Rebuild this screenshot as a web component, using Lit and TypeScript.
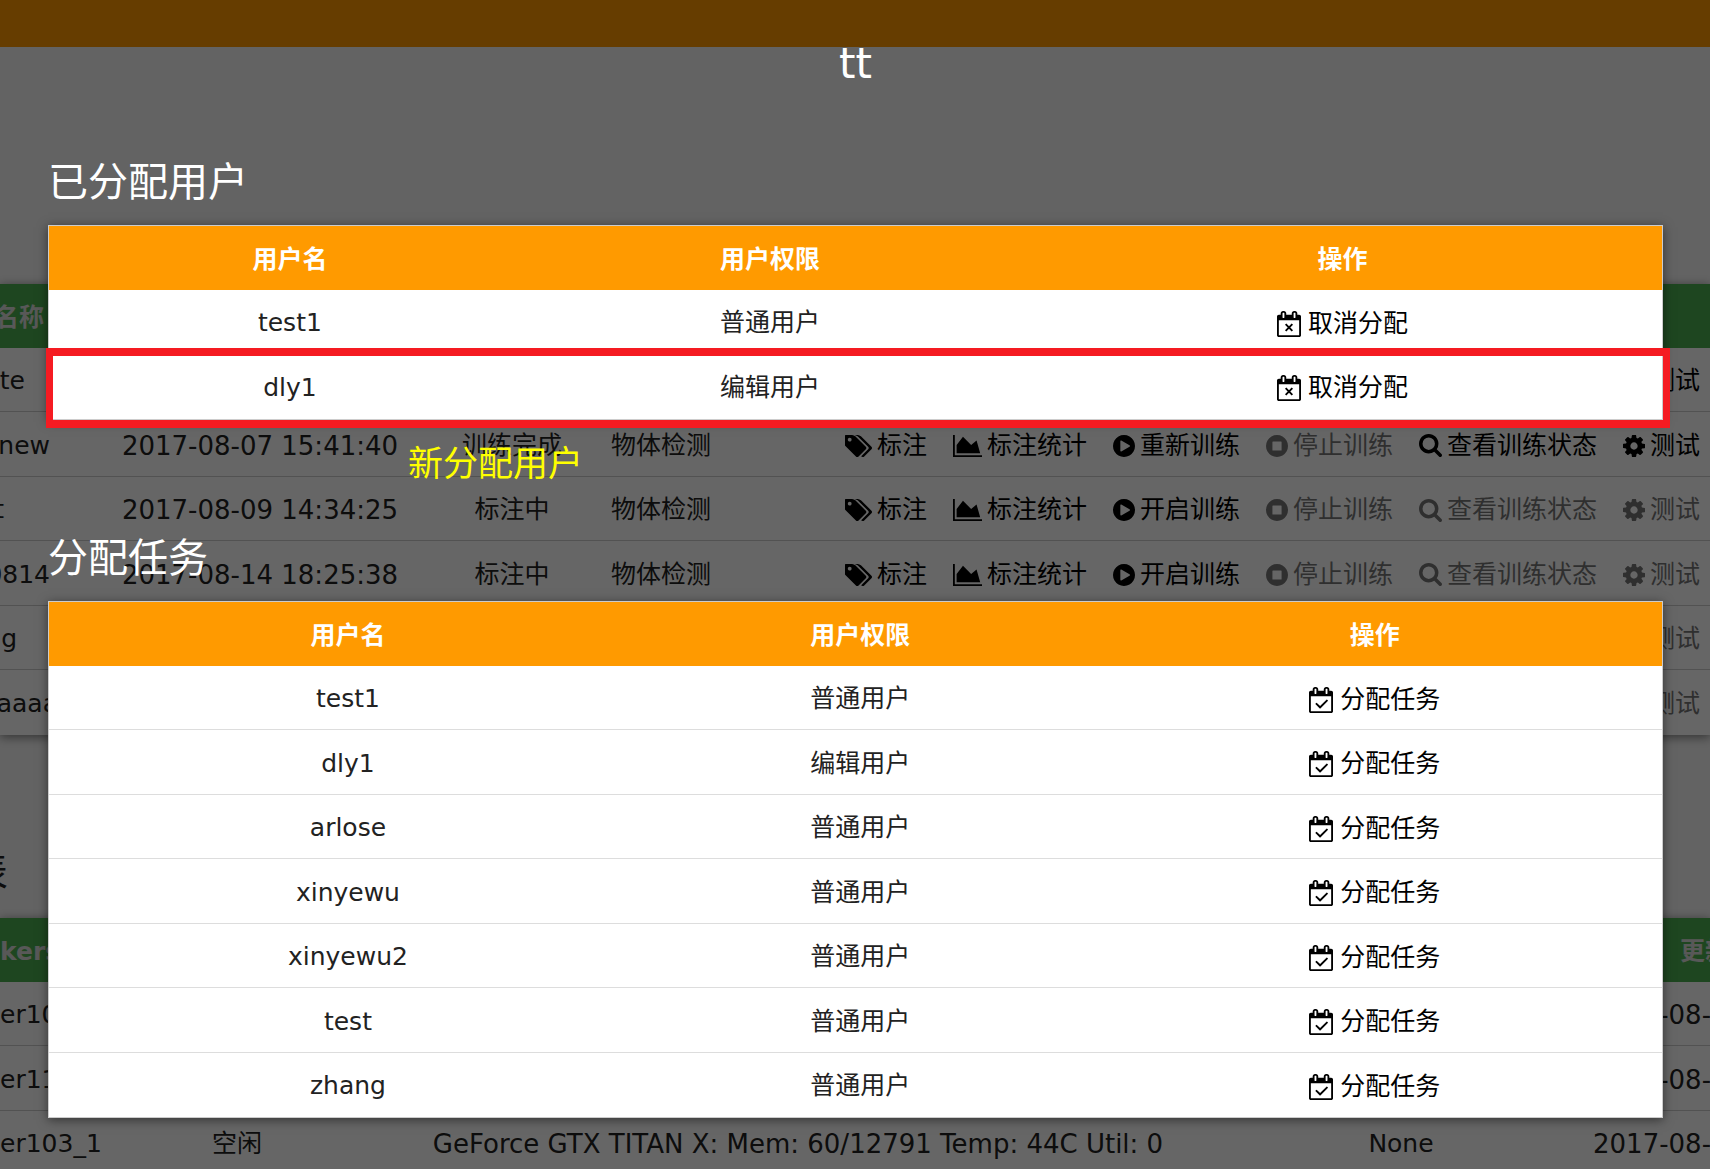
import { LitElement, html, css, svg } from "lit";
import { customElement } from "lit/decorators.js";

type IconName = "tags" | "chart" | "play" | "stop" | "search" | "cog" | "cancel" | "assign";

const DISC =
  "M896 128q209 0 385.500 103t279.500 279.500 103 385.500-103 385.500-279.500 279.500-385.500 103-385.500-103-279.500-279.500-103-385.500 103-385.500 279.500-279.500 385.500-103z";
const CALENDAR =
  "M128 1664h1408v-1024h-1408v1024zm384-1216v-288q0-14-9-23t-23-9h-64q-14 0-23 9t-9 23v288q0 14 9 23t23 9h64q14 0 23-9t9-23zm768 0v-288q0-14-9-23t-23-9h-64q-14 0-23 9t-9 23v288q0 14 9 23t23 9h64q14 0 23-9t9-23zm384-64v1280q0 52-38 90t-90 38h-1408q-52 0-90-38t-38-90v-1280q0-52 38-90t90-38h128v-96q0-66 47-113t113-47h64q66 0 113 47t47 113v96h384v-96q0-66 47-113t113-47h64q66 0 113 47t47 113v96h128q52 0 90 38t38 90z";

const ICONS: Record<IconName, { box: string; width: number; height: number; shape: unknown }> = {
  tags: {
    box: "0 128 1835 1515", width: 27, height: 22,
    shape: svg`<path d="M448 448q0-53-37.500-90.500t-90.500-37.500-90.500 37.500-37.500 90.500 37.500 90.500 90.500 37.500 90.500-37.500 37.500-90.500zm1003 576q0 53-37 90l-491 492q-39 37-91 37-53 0-90-37l-715-716q-38-37-64.500-101t-26.500-117v-416q0-52 38-90t90-38h416q53 0 117 26.500t102 64.500l715 714q37 39 37 91zm384 0q0 53-37 90l-491 492q-39 37-91 37-36 0-59-14t-53-45l470-470q37-37 37-90 0-52-37-91l-715-714q-38-38-102-64.500t-117-26.500h224q53 0 117 26.500t102 64.500l715 714q37 39 37 91z"/>`,
  },
  chart: {
    box: "0 128 2048 1536", width: 29, height: 22,
    shape: svg`<path d="M2048 1536v128h-2048v-1536h128v1408h1920zm-384-1024l256 896h-1664v-576l448-576 576 576z"/>`,
  },
  play: {
    box: "128 128 1536 1536", width: 22, height: 22,
    shape: svg`<path d="${DISC}m384 823q32-18 32-55t-32-55l-544-320q-31-19-64-1-32 19-32 56v640q0 37 32 56 16 8 32 8 17 0 32-9z"/>`,
  },
  stop: {
    box: "128 128 1536 1536", width: 22, height: 22,
    shape: svg`<path fill-rule="evenodd" d="${DISC}M608 576h576q32 0 32 32v576q0 32-32 32h-576q-32 0-32-32v-576q0-32 32-32z"/>`,
  },
  search: {
    box: "64 128 1664 1664", width: 23, height: 23,
    shape: svg`<path d="M1216 832q0-185-131.500-316.500t-316.500-131.500-316.500 131.500-131.500 316.500 131.500 316.500 316.500 131.500 316.500-131.500 131.500-316.500zm512 832q0 52-38 90t-90 38q-54 0-90-38l-343-342q-179 124-399 124-143 0-273.500-55.500t-225-150-150-225-55.500-273.500 55.500-273.500 150-225 225-150 273.500-55.500 273.500 55.500 225 150 150 225 55.500 273.500q0 220-124 399l343 343q37 37 37 90z"/>`,
  },
  cog: {
    box: "128 128 1536 1536", width: 22, height: 22,
    shape: svg`<path d="M1152 896q0-106-75-181t-181-75-181 75-75 181 75 181 181 75 181-75 75-181zm512-109v222q0 12-8 23t-20 13l-185 28q-19 54-39 91 35 50 107 138 10 12 10 25t-9 23q-27 37-99 108t-94 71q-12 0-26-9l-138-108q-44 23-91 38-16 136-29 186-7 28-36 28h-222q-14 0-24.500-8.500t-11.500-21.500l-28-184q-49-16-90-37l-141 107q-10 9-25 9-14 0-25-11-126-114-165-168-7-10-7-23 0-12 8-23 15-21 51-66.500t54-70.500q-27-50-41-99l-183-27q-13-2-21-12.500t-8-23.500v-222q0-12 8-23t19-13l186-28q14-46 39-92-40-57-107-138-10-12-10-24 0-10 9-23 26-36 98.500-107.500t94.500-71.500q13 0 26 10l138 107q44-23 91-38 16-136 29-186 7-28 36-28h222q14 0 24.500 8.500t11.500 21.500l28 184q49 16 90 37l142-107q9-9 24-9 13 0 25 10 129 119 165 170 7 8 7 22 0 12-8 23-15 21-51 66.500t-54 70.500q26 50 41 98l183 28q13 2 21 12.500t8 23.500z"/>`,
  },
  cancel: {
    box: "0 0 1664 1792", width: 24, height: 26,
    shape: svg`<path d="${CALENDAR}"/><path d="M600 910l464 464M1064 910l-464 464" fill="none" stroke="currentColor" stroke-width="130"/>`,
  },
  assign: {
    box: "0 0 1664 1792", width: 24, height: 26,
    shape: svg`<path d="${CALENDAR}"/><path d="M1303 964l-512 512q-10 9-23 9t-23-9l-288-288q-9-10-9-23t9-22l46-46q9-9 22-9t23 9l220 220 444-444q10-9 23-9t22 9l46 46q9 9 9 22t-9 23z"/>`,
  },
};

const icon = (name: IconName) => {
  const i = ICONS[name];
  return html`<svg class="icon" viewBox=${i.box} width=${i.width} height=${i.height} preserveAspectRatio="none" aria-hidden="true">${i.shape}</svg>`;
};

interface Task {
  name: string;
  // right edge of the name inside the scrolled column
  edge: number;
  date?: string;
  status?: string;
  kind?: string;
  train?: string;
  finished?: boolean;
  testable?: boolean;
}

const TASKS: Task[] = [
  { name: "te", edge: 25, testable: true },
  { name: "new", edge: 50, date: "2017-08-07 15:41:40", status: "训练完成", kind: "物体检测", train: "重新训练", finished: true, testable: true },
  { name: "t", edge: 4, date: "2017-08-09 14:34:25", status: "标注中", kind: "物体检测", train: "开启训练" },
  { name: "0814", edge: 50, date: "2017-08-14 18:25:38", status: "标注中", kind: "物体检测", train: "开启训练" },
  { name: "g", edge: 17 },
  { name: "aaaa", edge: 58 },
];

const WORKERS = [
  { name: "er10", date: "2017-08-" },
  { name: "er11", date: "2017-08-" },
  { name: "er103_1", status: "空闲", gpu: "GeForce GTX TITAN X: Mem: 60/12791 Temp: 44C Util: 0", task: "None", date: "2017-08-" },
];

interface User { name: string; role: string }

const ASSIGNED: User[] = [
  { name: "test1", role: "普通用户" },
  { name: "dly1", role: "编辑用户" },
];

const AVAILABLE: User[] = [
  { name: "test1", role: "普通用户" },
  { name: "dly1", role: "编辑用户" },
  { name: "arlose", role: "普通用户" },
  { name: "xinyewu", role: "普通用户" },
  { name: "xinyewu2", role: "普通用户" },
  { name: "test", role: "普通用户" },
  { name: "zhang", role: "普通用户" },
];

@customElement("app-root")
export class AppRoot extends LitElement {
  static styles = css`
    :host {
      display: block;
      position: relative;
      height: 100vh;
      overflow: hidden;
      background: #f8f8f8;
      color: #222;
      font-family: "DejaVu Sans", "Noto Sans CJK SC", sans-serif;
      font-size: 25px;
      line-height: 40px;
    }
    h1, h2 { margin: 0; font-weight: 400; }
    .bar { height: 47px; background: #ff9a00; }
    .page { padding-top: 237px; }
    .grid {
      width: 100%;
      table-layout: fixed;
      border-collapse: separate;
      border-spacing: 0;
      background: #fff;
      text-align: center;
      white-space: nowrap;
      box-shadow: 0 2px 10px rgba(0, 0, 0, 0.5);
    }
    .grid th, .grid td {
      box-sizing: border-box;
      height: 64px;
      padding: 3px 0 0;
    }
    .grid td { border-bottom: 1px solid #ddd; }
    .grid tr:nth-child(even) td { height: 65px; }
    .grid tbody tr:last-child td { border-bottom-color: transparent; }
    .grid th { color: #fff; font-weight: 700; }
    .page .grid th { background: #4cb050; color: #ddd; }
    .page .grid td { border-bottom-color: #ccc; }
    .c-name { width: 90px; }
    .c-date { width: 340px; }
    .c-status { width: 164px; }
    .c-kind { width: 134px; }
    .c-worker { width: 120px; }
    .c-state { width: 234px; }
    .c-gpu { width: 888px; }
    .c-task { width: 318px; }
    .edge { display: flex; justify-content: flex-end; }
    .wide { font-size: 26px; }
    .page .left { text-align: left; }
    .page .updated { padding-left: 33px; text-align: left; }
    .page .updated-head { padding-left: 120px; text-align: left; }
    .section {
      width: 8px;
      margin: 107px 0 16px;
      display: flex;
      justify-content: flex-end;
      font-size: 40px;
      line-height: 60px;
    }
    .actions {
      display: flex;
      justify-content: flex-end;
      gap: 26px;
      padding-right: 10px;
    }
    button {
      display: inline-flex;
      align-items: center;
      gap: 5px;
      padding: 0;
      border: 0;
      background: none;
      color: #000;
      font: inherit;
      white-space: nowrap;
      vertical-align: middle;
      cursor: pointer;
    }
    button:disabled { color: #777; cursor: default; }
    .icon { display: block; flex: none; fill: currentColor; }
    .overlay {
      position: absolute;
      inset: 0;
      padding: 30px 47px 0 48px;
      background: rgba(0, 0, 0, 0.6);
    }
    .title { color: #fff; font-size: 42px; line-height: 68px; text-align: center; }
    .heading { color: #fff; font-size: 40px; line-height: 60px; }
    .assigned { position: relative; margin-top: 54px; }
    .available { margin-top: 108px; }
    .users { margin-top: 13px; border: 1px solid #ccc; }
    .users th { background: #ff9a00; }
    .users button { gap: 7px; }
    .users th:first-child, .users td:first-child { padding-left: 14px; }
    .assigned .c-user { width: 29%; }
    .assigned .c-role { width: 31.4%; }
    .available .c-user { width: 36.2%; }
    .available .c-role { width: 28.2%; }
    .marker {
      position: absolute;
      left: -2px;
      right: -7px;
      bottom: -8px;
      height: 80px;
      box-sizing: border-box;
      border: 8px solid #f51b22;
      border-width: 8px 7px;
      pointer-events: none;
    }
    .note {
      position: absolute;
      left: 360px;
      top: 289px;
      color: #ff0;
      font-family: "Noto Sans CJK SC", sans-serif;
      font-size: 35px;
      line-height: 40px;
    }
  `;

  private action(name: IconName, label: string, enabled = true) {
    return html`<button type="button" ?disabled=${!enabled}>${icon(name)}${label}</button>`;
  }

  private taskRow(t: Task) {
    return html`<tr>
      <td><div class="edge" style="width:${t.edge}px">${t.name}</div></td>
      <td class="wide">${t.date}</td>
      <td>${t.status}</td>
      <td>${t.kind}</td>
      <td>
        <div class="actions">
          ${t.train
            ? html`${this.action("tags", "标注")}${this.action("chart", "标注统计")}${this.action("play", t.train)}
              ${this.action("stop", "停止训练", false)}${this.action("search", "查看训练状态", !!t.finished)}`
            : ""}
          ${this.action("cog", "测试", !!t.testable)}
        </div>
      </td>
    </tr>`;
  }

  private users(list: User[], name: IconName, label: string) {
    return html`<table class="grid users">
      <thead>
        <tr><th class="c-user">用户名</th><th class="c-role">用户权限</th><th>操作</th></tr>
      </thead>
      <tbody>
        ${list.map((u) => html`<tr><td>${u.name}</td><td>${u.role}</td><td>${this.action(name, label)}</td></tr>`)}
      </tbody>
    </table>`;
  }

  render() {
    return html`
      <header class="bar"></header>
      <main class="page">
        <table class="grid">
          <thead>
            <tr>
              <th class="c-name"><div class="edge" style="width:44px">名称</div></th>
              <th class="c-date"></th><th class="c-status"></th><th class="c-kind"></th><th></th>
            </tr>
          </thead>
          <tbody>${TASKS.map((t) => this.taskRow(t))}</tbody>
        </table>
        <h2 class="section">表</h2>
        <table class="grid">
          <thead>
            <tr>
              <th class="c-worker left">kers</th><th class="c-state"></th><th class="c-gpu"></th><th class="c-task"></th>
              <th class="updated-head">更新</th>
            </tr>
          </thead>
          <tbody>
            ${WORKERS.map((w) => html`<tr>
              <td class="left">${w.name}</td><td>${w.status}</td><td class="wide">${w.gpu}</td><td>${w.task}</td>
              <td class="updated wide">${w.date}</td>
            </tr>`)}
          </tbody>
        </table>
      </main>
      <div class="overlay" role="dialog" aria-labelledby="title">
        <h1 class="title" id="title">tt</h1>
        <section class="assigned">
          <h2 class="heading">已分配用户</h2>
          ${this.users(ASSIGNED, "cancel", "取消分配")}
          <div class="marker"></div>
          <div class="note">新分配用户</div>
        </section>
        <section class="available">
          <h2 class="heading">分配任务</h2>
          ${this.users(AVAILABLE, "assign", "分配任务")}
        </section>
      </div>
    `;
  }
}
